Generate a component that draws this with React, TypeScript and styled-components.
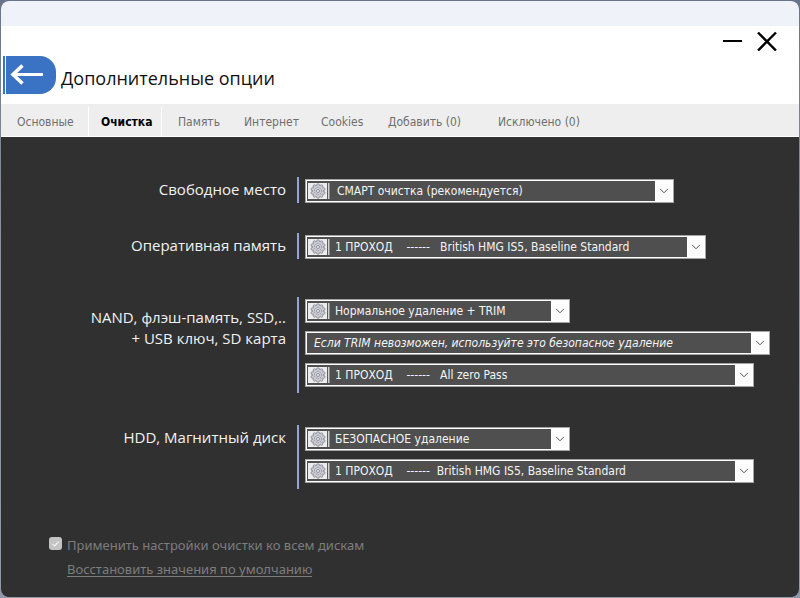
import React, { useState } from "react";
import styled, { createGlobalStyle } from "styled-components";

const Global = createGlobalStyle`
  * { box-sizing: border-box; }
  html, body { margin: 0; }
  body {
    background: linear-gradient(#68738c, #8b93a3 40%, #8f99aa);
    font-family: "Noto Sans", sans-serif;
  }
  button, select, input { font: inherit; margin: 0; }
`;

const uiFont = `"DejaVu Sans Condensed", "DejaVu Sans", sans-serif`;

const Desktop = styled.div`
  min-height: 100vh;
  padding: 1px;
  display: flex;
`;

const Window = styled.div`
  flex: 1;
  display: flex;
  flex-direction: column;
  border-radius: 8px;
  overflow: hidden;
  background: #303030;
`;

const TitleBar = styled.div`
  height: 25px;
  background: #eff2f9;
`;

const Header = styled.header`
  display: flex;
  align-items: flex-end;
  gap: 5px;
  height: 78px;
  padding: 0 22px 10px 2px;
  background: #fff;
`;

const BackButton = styled.button`
  width: 53px;
  height: 38px;
  padding: 0;
  border: 0;
  border-radius: 0 16px 16px 0;
  overflow: hidden;
  background: none;
  cursor: pointer;
  svg { display: block; }
`;

const Title = styled.h1`
  flex: 1;
  margin: 0 0 4px;
  font-family: "Open Sans", "Noto Sans", sans-serif;
  font-size: 18px;
  line-height: 24px;
  font-weight: 400;
  color: #111;
`;

const WindowButtons = styled.div`
  align-self: flex-start;
  display: flex;
  gap: 14px;
  padding-top: 5px;
`;

const WindowButton = styled.button`
  width: 20px;
  height: 20px;
  padding: 0;
  border: 0;
  background: none;
  cursor: pointer;
  svg { display: block; }
`;

const Tabs = styled.nav`
  display: flex;
  height: 33px;
  padding-top: 3px;
  background: #eee;
  border-bottom: 1px solid #fff;
`;

const Tab = styled.button<{ $width: number; $active: boolean }>`
  width: ${(p) => p.$width}px;
  padding: ${(p) => (p.$active ? "0 0 0 12px" : "0 0 0 16px")};
  border: solid #fff;
  border-width: ${(p) => (p.$active ? "0 1px" : "0")};
  background: none;
  font-family: ${uiFont};
  font-size: 12px;
  line-height: 16px;
  font-weight: ${(p) => (p.$active ? 700 : 400)};
  text-align: left;
  white-space: nowrap;
  color: ${(p) => (p.$active ? "#000" : "#6e6e6e")};
  cursor: pointer;
`;

const Content = styled.main`
  flex: 1;
  display: flex;
  flex-direction: column;
  justify-content: space-between;
  padding: 40px 28px 20px 0;
`;

const Groups = styled.div`
  display: flex;
  flex-direction: column;
  gap: 32px;
`;

const Group = styled.section<{ $spaced?: boolean }>`
  display: grid;
  grid-template-columns: 285px minmax(0, 1fr);
  column-gap: 11px;
  margin-top: ${(p) => (p.$spaced ? "8px" : "0")};
`;

const GroupLabel = styled.h2<{ $tall?: boolean }>`
  margin: 0;
  padding-top: ${(p) => (p.$tall ? "10px" : "2px")};
  font-family: "Open Sans", "Noto Sans", sans-serif;
  font-size: 15px;
  line-height: 21px;
  font-weight: 400;
  text-align: right;
  color: #f2f2f2;
`;

const Fields = styled.div<{ $tall?: boolean }>`
  display: flex;
  flex-direction: column;
  gap: 8px;
  padding: ${(p) => (p.$tall ? "2px 0 6px 6px" : "2px 0 0 6px")};
  border-left: 2px solid #8fa6dc;
  margin-bottom: ${(p) => (p.$tall ? "0" : "-2px")};
`;

const Combo = styled.div<{ $width: number }>`
  display: flex;
  align-items: stretch;
  width: ${(p) => p.$width}px;
  max-width: 100%;
  height: 24px;
  border: 1px solid #a4a4a4;
  background: #fff;
  padding: 1px 0 1px 1px;
`;

const ComboBody = styled.div`
  flex: 1;
  min-width: 0;
  display: flex;
  align-items: center;
  padding-left: 1px;
  background: #4f4f4f;
  svg { flex: none; }
`;

const Select = styled.select<{ $italic: boolean; $indent: number }>`
  appearance: none;
  flex: 1;
  min-width: 0;
  height: 20px;
  padding: 0 0 0 ${(p) => p.$indent}px;
  border: 0;
  outline: 0;
  background: transparent;
  color: #f5f5f5;
  font-family: ${uiFont};
  font-size: 12px;
  line-height: 20px;
  font-style: ${(p) => (p.$italic ? "italic" : "normal")};
`;

const Arrow = styled.span`
  display: flex;
  align-items: center;
  justify-content: center;
  width: 18px;
`;

const Footer = styled.footer`
  display: grid;
  grid-template-columns: 13px 1fr;
  column-gap: 5px;
  row-gap: 4px;
  padding-left: 48px;
  font-size: 13px;
  line-height: 20px;
  color: #7d7d7d;
`;

const Check = styled.input`
  appearance: none;
  width: 13px;
  height: 13px;
  margin-top: 2px;
  border-radius: 3px;
  background: #c4c4c4;
  &:checked {
    background: #c4c4c4
      url("data:image/svg+xml,%3Csvg xmlns='http://www.w3.org/2000/svg' width='13' height='13'%3E%3Cpath d='M3.5 6.8l2.2 2.2 4-4.4' fill='none' stroke='%23f4f4f4' stroke-width='1.2'/%3E%3C/svg%3E");
  }
`;

const FootLabel = styled.label`
  justify-self: start;
`;

const ResetLink = styled.a`
  grid-column: 2;
  justify-self: start;
  height: 18px;
  border-bottom: 1px solid #7d7d7d;
  color: inherit;
  text-decoration: none;
`;

const teeth = Array.from({ length: 10 }, (_, i) => i * 36);

const GearIcon = () => (
  <svg width="22" height="18" viewBox="0 0 22 18" aria-hidden="true">
    <rect x="0" y="1" width="19" height="16" fill="#ececee" />
    <rect x="19" y="1" width="1" height="16" fill="#5c5c5c" />
    <rect x="20" y="1" width="1" height="16" fill="#d0d0d0" />
    <rect x="21" y="1" width="1" height="16" fill="#8c8c8c" />
    {teeth.map((a) => (
      <circle
        key={a}
        cx="10"
        cy="3.2"
        r="1.5"
        fill="#c9cad0"
        stroke="#7f818b"
        strokeWidth=".7"
        transform={`rotate(${a} 10 9)`}
      />
    ))}
    <circle cx="10" cy="9" r="5.2" fill="#d0d1d7" />
    <circle cx="10" cy="9" r="3.6" fill="none" stroke="#9b9da6" strokeWidth="1.2" strokeDasharray="1.4 .86" />
    <circle cx="10" cy="9" r="1.5" fill="#f4f4f6" stroke="#777983" strokeWidth=".8" />
  </svg>
);

const ArrowIcon = () => (
  <svg width="10" height="6" viewBox="0 0 10 6" aria-hidden="true">
    <path d="M1 .8l4 4 4-4" fill="none" stroke="#555" strokeWidth="1" />
  </svg>
);

type Field = { name: string; text: string; width: number; icon?: boolean; indent?: number };

const pass = (method: string, gap = 3) =>
  `1 ПРОХОД${"\u00a0".repeat(4)}------${"\u00a0".repeat(gap)}${method}`;

const groups: { lines: string[]; spaced?: boolean; tall?: boolean; fields: Field[] }[] = [
  {
    lines: ["Свободное место"],
    fields: [{ name: "Свободное место", text: "СМАРТ очистка (рекомендуется)", width: 369, indent: 7 }],
  },
  {
    lines: ["Оперативная память"],
    fields: [{ name: "Оперативная память", text: pass("British HMG IS5, Baseline Standard"), width: 401 }],
  },
  {
    lines: ["NAND, флэш-память, SSD,..", "+ USB ключ, SD карта"],
    spaced: true,
    tall: true,
    fields: [
      { name: "Удаление на SSD", text: "Нормальное удаление + TRIM", width: 265 },
      {
        name: "Удаление без TRIM",
        text: "Если TRIM невозможен, используйте это безопасное удаление",
        width: 465,
        icon: false,
        indent: 6,
      },
      { name: "Метод для SSD", text: pass("All zero Pass"), width: 449 },
    ],
  },
  {
    lines: ["HDD, Магнитный диск"],
    tall: true,
    fields: [
      { name: "Удаление на HDD", text: "БЕЗОПАСНОЕ удаление", width: 265 },
      { name: "Метод для HDD", text: pass("British HMG IS5, Baseline Standard", 2), width: 449 },
    ],
  },
];

const tabs = [
  { label: "Основные", width: 87 },
  { label: "Очистка", width: 74 },
  { label: "Память", width: 66 },
  { label: "Интернет", width: 77 },
  { label: "Cookies", width: 67 },
  { label: "Добавить (0)", width: 110 },
  { label: "Исключено (0)", width: 110 },
];

function ComboBox({ field }: { field: Field }) {
  const hasIcon = field.icon !== false;
  return (
    <Combo $width={field.width}>
      <ComboBody>
        {hasIcon && <GearIcon />}
        <Select aria-label={field.name} $italic={!hasIcon} $indent={field.indent ?? 5}>
          <option>{field.text}</option>
        </Select>
      </ComboBody>
      <Arrow>
        <ArrowIcon />
      </Arrow>
    </Combo>
  );
}

export default function App() {
  const [active, setActive] = useState(1);
  return (
    <>
      <Global />
      <Desktop>
        <Window>
          <TitleBar />
          <Header>
            <BackButton aria-label="Назад">
              <svg width="53" height="38" viewBox="0 0 53 38">
                <rect width="53" height="38" fill="#3a72c4" />
                <rect x="2" width="1" height="38" fill="#fff" />
                <path d="M40 18.5H10" fill="none" stroke="#fff" strokeWidth="3" />
                <path d="M19.5 9.5L10 18.5L19.5 27.5" fill="none" stroke="#fff" strokeWidth="3.6" />
              </svg>
            </BackButton>
            <Title>Дополнительные опции</Title>
            <WindowButtons>
              <WindowButton aria-label="Свернуть">
                <svg width="20" height="20">
                  <path d="M0 10h19" stroke="#000" strokeWidth="2" />
                </svg>
              </WindowButton>
              <WindowButton aria-label="Закрыть">
                <svg width="20" height="20">
                  <path d="M1 1.5l18 18M19 1.5L1 19.5" stroke="#000" strokeWidth="2.4" />
                </svg>
              </WindowButton>
            </WindowButtons>
          </Header>
          <Tabs>
            {tabs.map((t, i) => (
              <Tab key={t.label} $width={t.width} $active={i === active} onClick={() => setActive(i)}>
                {t.label}
              </Tab>
            ))}
          </Tabs>
          <Content>
            <Groups>
              {groups.map((g) => (
                <Group key={g.lines[0]} $spaced={g.spaced}>
                  <GroupLabel $tall={g.spaced}>
                    {g.lines.map((line) => (
                      <div key={line}>{line}</div>
                    ))}
                  </GroupLabel>
                  <Fields $tall={g.tall}>
                    {g.fields.map((f) => (
                      <ComboBox key={f.name} field={f} />
                    ))}
                  </Fields>
                </Group>
              ))}
            </Groups>
            <Footer>
              <Check type="checkbox" id="apply-all" defaultChecked />
              <FootLabel htmlFor="apply-all">Применить настройки очистки ко всем дискам</FootLabel>
              <ResetLink href="#">Восстановить значения по умолчанию</ResetLink>
            </Footer>
          </Content>
        </Window>
      </Desktop>
    </>
  );
}
